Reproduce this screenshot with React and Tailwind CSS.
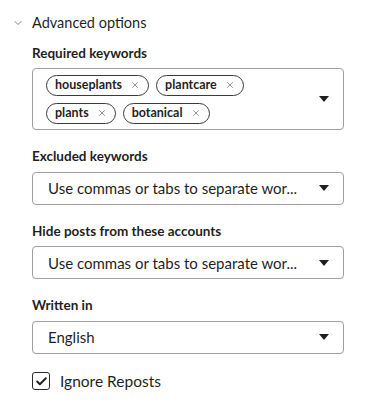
import React from 'react';
import { ChevronDown, X, Check } from 'lucide-react';

const Caret = () => (
    <svg width="10" height="6" viewBox="0 0 10 6" className="shrink-0">
        <path d="M0 0 L10 0 L5 6 Z" fill="#1f1f1f" />
    </svg>
);

const Chip = ({ label }) => (
    <span className="inline-flex items-center h-[21px] pl-[8px] pr-[8px] gap-[8px] rounded-full border border-[#3a3a3a] text-[12.5px] font-bold text-[#1f1f1f] leading-none">
        {label}
        <X size={10} strokeWidth={1.5} className="text-[#555]" />
    </span>
);

const SelectBox = ({ value }) => (
    <div className="h-[33px] flex items-center justify-between pl-[15px] pr-[14px] border border-[#a0a0a0] rounded-[4px] bg-white">
        <span className="text-[15px] text-[#1f1f1f] whitespace-nowrap">{value}</span>
        <Caret />
    </div>
);

const Label = ({ children }) => (
    <div className="text-[13.5px] font-bold text-[#1f1f1f] leading-none mb-[8px]">{children}</div>
);

export default function App() {
    const chips = ['houseplants', 'plantcare', 'plants', 'botanical'];
    return (
        <div className="w-[373px] h-[409px] bg-white font-['Lato',sans-serif] text-[#1f1f1f]">
            <div className="pt-[12px] pl-[12px] flex items-center gap-[8px]">
                <ChevronDown size={12} strokeWidth={1.5} className="text-[#555]" />
                <span className="text-[14.5px]">Advanced options</span>
            </div>

            <div className="pl-[32px] pr-[29px] pt-[13px]">
                <Label>Required keywords</Label>
                <div className="h-[62px] flex items-center justify-between pl-[13px] pr-[14px] border border-[#a0a0a0] rounded-[4px]">
                    <div className="flex flex-wrap gap-x-[7px] gap-y-[7px] w-[250px]">
                        {chips.map(c => <Chip key={c} label={c} />)}
                    </div>
                    <Caret />
                </div>

                <div className="mt-[20px]">
                    <Label>Excluded keywords</Label>
                    <SelectBox value="Use commas or tabs to separate wor..." />
                </div>

                <div className="mt-[20px]">
                    <Label>Hide posts from these accounts</Label>
                    <SelectBox value="Use commas or tabs to separate wor..." />
                </div>

                <div className="mt-[20px]">
                    <Label>Written in</Label>
                    <SelectBox value="English" />
                </div>

                <div className="mt-[16px] flex items-center gap-[10px]">
                    <span className="w-[18px] h-[18px] rounded-[3px] border-[1.5px] border-[#2a2a2a] flex items-center justify-center">
                        <Check size={13} strokeWidth={3.5} className="text-[#1f1f1f]" />
                    </span>
                    <span className="text-[15.5px]">Ignore Reposts</span>
                </div>
            </div>
        </div>
    );
}
